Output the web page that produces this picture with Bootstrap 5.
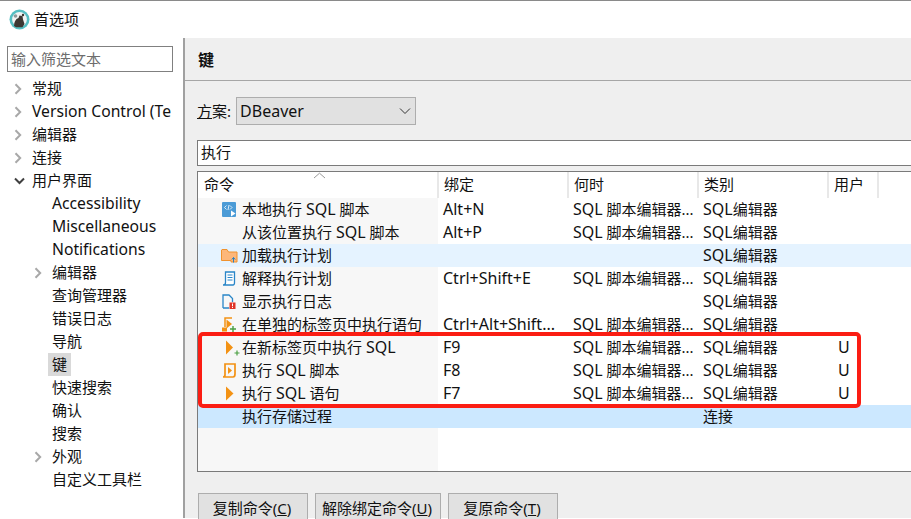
<!DOCTYPE html>
<html lang="zh">
<head>
<meta charset="utf-8">
<title>首选项</title>
<link href="https://cdn.jsdelivr.net/npm/bootstrap@5.3.0/dist/css/bootstrap.min.css" rel="stylesheet">
<style>
html,body{height:519px;overflow:hidden}
body{width:911px;background:#fff;color:#111;font:15px/23px "Noto Sans","Noto Sans CJK SC",sans-serif}
.lat{font-size:16px}
.tree .lat{font-size:15.7px}
.wintop{height:38px;border-top:1px solid #8a8a8a;padding-left:9px}
.wintop svg{flex:none}
.mainrow{height:480px}
.side{width:185px;flex:none;border-right:2px solid #a0a0a0;padding:8px 10px 0 7px}
.filterbox{width:166px;height:26px;border:1px solid #808080;border-radius:0;padding:0 3px;font-size:15px;color:#666;line-height:24px;margin-bottom:5px}
.filterbox::placeholder{color:#6d6d6d;opacity:1}
.tree{width:166px;overflow:hidden;white-space:nowrap}
.tree li{height:23px;display:flex;align-items:center}
.lv1{padding-left:7px}
.lv2{padding-left:27px}
.arrowslot{width:18px;flex:none;display:flex;align-items:center}
.picked{background:#d9d9d9;padding:0 4px;margin-left:-4px}
.panel{flex:1;min-width:0;background:#efefef}
.panelhead{height:43px;border-bottom:1px solid #a6a6a6;padding-left:13px;font-weight:700;font-size:16px;line-height:44px;margin-bottom:16px}
.panelbody{padding-left:12px}
.schemerow{height:28px;margin-bottom:15px}
.schemesel{width:180px;height:28px;margin-left:5px;border:1px solid #adadad;border-radius:0;background-color:#e1e1e1;padding:0 3px;font-size:16px;color:#111;line-height:26px;background-image:url("data:image/svg+xml,%3csvg xmlns='http://www.w3.org/2000/svg' viewBox='0 0 12 8'%3e%3cpath fill='none' stroke='%23333' d='M1 1.500 6 6.500 11 1.500'/%3e%3c/svg%3e");background-position:right 4px center;background-size:12px 8px}
.findbox{height:26px;border:1px solid #7a7a7a;border-right:0;border-radius:0;padding:0 3px 3px;font-size:15px;color:#111;margin-bottom:5px;display:block;width:100%}
.gridbox{height:301px;border:1px solid #7a7a7a;border-right:0;background:#fff;overflow:hidden;position:relative}
.cmdgrid{table-layout:fixed;width:730px;margin:0;--bs-table-bg:transparent;--bs-table-border-color:transparent;color:#111}
.cmdgrid th,.cmdgrid td{height:23px;padding:0 0 0 5px;border:0;font-weight:400;white-space:nowrap;overflow:hidden;line-height:23px;box-shadow:none}
.cmdgrid th{height:26px;padding-bottom:2px;border-right:2px solid #e8e8e8;background:#fff}
.cmdgrid td:first-child{background:#f7f7f7;padding-left:24px}
.cmdgrid th:first-child{padding-left:6px}
.cmdgrid td.ucol{padding-left:10px}
.cmdcell{display:flex;align-items:center;white-space:pre}
.cmdicon{width:20px;flex:none;display:flex;align-items:center}
.hover-row td,.cmdgrid .hover-row td:first-child{background:#e5f3ff}
.sel-row td,.cmdgrid .sel-row td:first-child{background:#cce8ff}
.fill-row td{height:43px}
.sortmark{position:absolute;left:115px;top:0}
.redframe{position:absolute;left:0;top:160px;width:663px;height:76px;border:4px solid #fb1d13;border-radius:5px}
.footbtns{margin-top:21px;gap:7px;padding-left:1px}
.footbtn{height:27px;border:1px solid #adadad;border-bottom:0;border-radius:0;background:#e1e1e1;color:#111;font-size:15px;line-height:23px;padding:2px 2px 0 0;text-align:center}
.b-copy,.b-reset{width:110px}
.b-unbind{width:126px}
.icon-folder{margin-left:-1px}
.icon-play{margin-left:4px}
</style>
</head>
<body>
<svg width="0" height="0" class="d-block position-absolute">
  <defs>
    <symbol id="chev" viewBox="0 0 8 12"><path d="M1.500 1.200 6.200 6 1.500 10.800" fill="none" stroke="#a8a8a8" stroke-width="2"/></symbol>
  </defs>
</svg>

<div class="wintop d-flex align-items-center gap-1">
  <svg width="21" height="21" viewBox="0 0 21 21">
    <circle cx="10.500" cy="10.500" r="10" fill="#55bfc3"/>
    <circle cx="10.500" cy="10.500" r="7.400" fill="#f1f4f4"/>
    <path d="M5 17c0-4 1.500-7 4.500-8l1-2.500 3 .5 .5 3.500 1.500 4.500-2 3.200H7z" fill="#3c3833"/>
    <circle cx="6.500" cy="7" r="1.800" fill="#8d9a9c"/>
    <circle cx="14" cy="6" r="1.200" fill="#3c3833"/>
  </svg>
  <span>首选项</span>
</div>

<div class="mainrow d-flex">
  <aside class="side">
    <input class="form-control filterbox" placeholder="输入筛选文本" aria-label="输入筛选文本">
    <ul class="tree list-unstyled m-0">
      <li class="lv1"><span class="arrowslot"><svg width="8" height="12"><use href="#chev"/></svg></span>常规</li>
      <li class="lv1"><span class="arrowslot"><svg width="8" height="12"><use href="#chev"/></svg></span><span class="lat">Version Control (Te</span></li>
      <li class="lv1"><span class="arrowslot"><svg width="8" height="12"><use href="#chev"/></svg></span>编辑器</li>
      <li class="lv1"><span class="arrowslot"><svg width="8" height="12"><use href="#chev"/></svg></span>连接</li>
      <li class="lv1"><span class="arrowslot"><svg width="11" height="8" viewBox="0 0 11 8"><path d="M1 1.500 5.500 6 10 1.500" fill="none" stroke="#404040" stroke-width="2"/></svg></span>用户界面</li>
      <li class="lv2"><span class="arrowslot"></span><span class="lat">Accessibility</span></li>
      <li class="lv2"><span class="arrowslot"></span><span class="lat">Miscellaneous</span></li>
      <li class="lv2"><span class="arrowslot"></span><span class="lat">Notifications</span></li>
      <li class="lv2"><span class="arrowslot"><svg width="8" height="12"><use href="#chev"/></svg></span>编辑器</li>
      <li class="lv2"><span class="arrowslot"></span>查询管理器</li>
      <li class="lv2"><span class="arrowslot"></span>错误日志</li>
      <li class="lv2"><span class="arrowslot"></span>导航</li>
      <li class="lv2"><span class="arrowslot"></span><span class="picked">键</span></li>
      <li class="lv2"><span class="arrowslot"></span>快速搜索</li>
      <li class="lv2"><span class="arrowslot"></span>确认</li>
      <li class="lv2"><span class="arrowslot"></span>搜索</li>
      <li class="lv2"><span class="arrowslot"><svg width="8" height="12"><use href="#chev"/></svg></span>外观</li>
      <li class="lv2"><span class="arrowslot"></span>自定义工具栏</li>
    </ul>
  </aside>

  <main class="panel">
    <div class="panelhead">键</div>
    <div class="panelbody">
      <div class="schemerow d-flex align-items-center">
        <label for="scheme"><u>方</u>案:</label>
        <select id="scheme" class="form-select schemesel"><option>DBeaver</option></select>
      </div>
      <input class="form-control findbox" value="执行" aria-label="筛选">
      <div class="gridbox">
        <table class="table cmdgrid">
          <colgroup><col style="width:240px"><col style="width:130px"><col style="width:130px"><col style="width:130px"><col style="width:50px"><col style="width:50px"></colgroup>
          <thead><tr><th>命令</th><th>绑定</th><th>何时</th><th>类别</th><th>用户</th><th class="border-0"></th></tr></thead>
          <tbody>
            <tr><td><div class="cmdcell"><span class="cmdicon"><svg width="14" height="15" viewBox="0 0 14 15"><rect width="14" height="15" rx="1" fill="#4b9bd6"/><path d="M4.500 3.500 2.500 5.500 4.500 7.500M8 3.500l2 2-2 2M7 3l-1 5" stroke="#fff" stroke-width=".8" fill="none"/><path d="M9 8.500l4.500 3-4.500 3z" fill="#fff"/></svg></span><span>本地执行 <span class="lat">SQL</span> 脚本</span></div></td><td><span class="lat">Alt+N</span></td><td><span class="lat">SQL</span> 脚本编辑器...</td><td><span class="lat">SQL</span>编辑器</td><td></td><td></td></tr>
            <tr><td><div class="cmdcell"><span class="cmdicon"></span><span>从该位置执行 <span class="lat">SQL</span> 脚本</span></div></td><td><span class="lat">Alt+P</span></td><td><span class="lat">SQL</span> 脚本编辑器...</td><td><span class="lat">SQL</span>编辑器</td><td></td><td></td></tr>
            <tr class="hover-row"><td><div class="cmdcell"><span class="cmdicon"><svg class="icon-folder" width="17" height="15" viewBox="0 0 17 15"><path d="M.5 2V12.500H10V14H16V4H7.500L6 1.500H1z" fill="#fdb77a" stroke="#f0922e"/><path d="M12.500 14.500V9.500M10.800 11.500l1.700-2 1.700 2" stroke="#2a7fc0" fill="none"/></svg></span>加载执行计划</div></td><td></td><td></td><td><span class="lat">SQL</span>编辑器</td><td></td><td></td></tr>
            <tr><td><div class="cmdcell"><span class="cmdicon"><svg width="14" height="15" viewBox="0 0 14 15"><path d="M3.500 1H12.500V11.500C12.500 13 12 14 11 14H1C2.500 14 3.500 13 3.500 11.500Z" fill="#fff" stroke="#2a86c8" stroke-width="1.300"/><path d="M5.500 4h5M5.500 6.500h5M5.500 9h5" stroke="#2a86c8"/></svg></span>解释执行计划</div></td><td><span class="lat">Ctrl+Shift+E</span></td><td><span class="lat">SQL</span> 脚本编辑器...</td><td><span class="lat">SQL</span>编辑器</td><td></td><td></td></tr>
            <tr><td><div class="cmdcell"><span class="cmdicon"><svg width="14" height="15" viewBox="0 0 14 15"><path d="M1 14V1H7L10.500 4.500V8M1 14H7" fill="none" stroke="#2a86c8" stroke-width="1.300"/><rect x="7.500" y="8.500" width="6" height="6.500" fill="#e03327"/><path d="M10.500 9.500v2.800M10.500 13v1" stroke="#fff"/></svg></span>显示执行日志</div></td><td></td><td></td><td><span class="lat">SQL</span>编辑器</td><td></td><td></td></tr>
            <tr><td><div class="cmdcell"><span class="cmdicon"><svg width="15" height="15" viewBox="0 0 15 15"><path d="M3 10V1H10" fill="none" stroke="#f39214" stroke-width="1.500"/><path d="M4.500 2.500 10 7 4.500 11.500z" fill="#f39214"/><rect y="10.500" width="5" height="4" fill="#f39214"/><path d="M11 9v6M8 12h6" stroke="#4a9f42" stroke-width="1.400"/></svg></span>在单独的标签页中执行语句</div></td><td><span class="lat">Ctrl+Alt+Shift...</span></td><td><span class="lat">SQL</span> 脚本编辑器...</td><td><span class="lat">SQL</span>编辑器</td><td></td><td></td></tr>
            <tr><td><div class="cmdcell"><span class="cmdicon"><svg width="18" height="16" viewBox="0 0 18 16"><path d="M4 .5 11 7.500 4 14.500z" fill="#f39214"/><path d="M15 10.500v5M12.500 13h5" stroke="#4a9f42" stroke-width="1.200"/></svg></span><span>在新标签页中执行 <span class="lat">SQL</span></span></div></td><td><span class="lat">F9</span></td><td><span class="lat">SQL</span> 脚本编辑器...</td><td><span class="lat">SQL</span>编辑器</td><td class="ucol"><span class="lat">U</span></td><td></td></tr>
            <tr><td><div class="cmdcell"><span class="cmdicon"><svg width="14" height="15" viewBox="0 0 14 15"><path d="M3 12V1H13V11C13 13 12 14 11 14H1C2 14 3 13 3 12Z" fill="none" stroke="#f39214" stroke-width="1.700"/><path d="M6 4 10 7.500 6 11z" fill="#f39214"/></svg></span><span>执行 <span class="lat">SQL</span> 脚本</span></div></td><td><span class="lat">F8</span></td><td><span class="lat">SQL</span> 脚本编辑器...</td><td><span class="lat">SQL</span>编辑器</td><td class="ucol"><span class="lat">U</span></td><td></td></tr>
            <tr><td><div class="cmdcell"><span class="cmdicon"><svg class="icon-play" width="8" height="15" viewBox="0 0 8 15"><path d="M0 .5 7.500 7.500 0 14.500z" fill="#f39214"/></svg></span><span>执行 <span class="lat">SQL</span> 语句</span></div></td><td><span class="lat">F7</span></td><td><span class="lat">SQL</span> 脚本编辑器...</td><td><span class="lat">SQL</span>编辑器</td><td class="ucol"><span class="lat">U</span></td><td></td></tr>
            <tr class="sel-row"><td><div class="cmdcell"><span class="cmdicon"></span>执行存储过程</div></td><td></td><td></td><td>连接</td><td></td><td></td></tr>
            <tr class="fill-row"><td></td><td></td><td></td><td></td><td></td><td></td></tr>
          </tbody>
        </table>
        <svg class="sortmark" width="13" height="7" viewBox="0 0 13 7"><path d="M1 6 6.500 1.200 12 6" fill="none" stroke="#9a9a9a"/></svg>
        <div class="redframe"></div>
      </div>
      <div class="footbtns d-flex">
        <button type="button" class="btn footbtn b-copy">复制命令(<u>C</u>)</button>
        <button type="button" class="btn footbtn b-unbind">解除绑定命令(<u>U</u>)</button>
        <button type="button" class="btn footbtn b-reset">复原命令(<u>T</u>)</button>
      </div>
    </div>
  </main>
</div>
<script src="https://cdn.jsdelivr.net/npm/bootstrap@5.3.0/dist/js/bootstrap.bundle.min.js"></script>
</body>
</html>
